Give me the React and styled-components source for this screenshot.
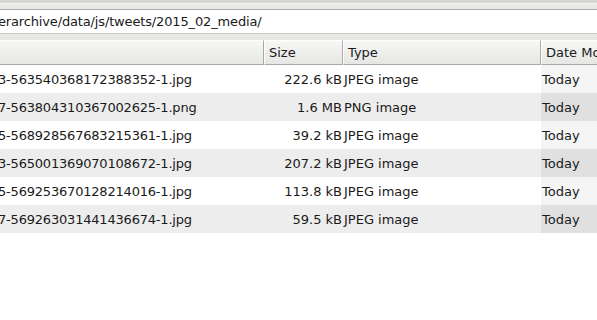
import React from 'react'
import styled, { createGlobalStyle } from 'styled-components'

const Global = createGlobalStyle`
  html, body {
    margin: 0;
    padding: 0;
    background: #ffffff;
  }
  body {
    font-family: "DejaVu Sans", "Liberation Sans", sans-serif;
    font-size: 13px;
    color: #1a1a1a;
    overflow: hidden;
  }
`;

const Window = styled.div`
  width: 597px;
  height: 320px;
  display: flex;
  flex-direction: column;
  background: #ffffff;
`;

const TopStrip = styled.div`
  height: 3px;
  background: #d6d6d4;
  border-bottom: 1px solid #f4f4f3;
`;

const PathBar = styled.div`
  background: #e8e8e7;
  padding: 5px 0 6px;
`;

const Entry = styled.div`
  height: 23px;
  background: #ffffff;
  border-top: 1px solid #a9a9a7;
  border-bottom: 1px solid #c9c9c7;
  display: flex;
  align-items: center;
  white-space: nowrap;
  overflow: hidden;
  & span {
    margin-left: -2px;
    letter-spacing: -0.15px;
  }
`;

const Header = styled.div`
  display: grid;
  grid-template-columns: 264px 79px 198px 1fr;
  height: 25px;
  background: #e8e8e7;
`;

const HeaderCell = styled.div`
  display: flex;
  align-items: center;
  padding-left: 4px;
  background: linear-gradient(#f7f7f6, #e6e6e5);
  border-right: 1px solid #a8a8a6;
  border-bottom: 1px solid #a8a8a6;
  border-left: 1px solid #ffffff;
  border-top: 1px solid #ffffff;
  white-space: nowrap;
  overflow: hidden;
  &:first-child {
    border-left: none;
  }
  &:last-child {
    border-right: none;
  }
`;

const Row = styled.div`
  display: grid;
  grid-template-columns: 264px 79px 198px 1fr;
  height: 28px;
  background: ${p => (p.$odd ? '#ededed' : '#ffffff')};
`;

const Cell = styled.div`
  display: flex;
  align-items: center;
  white-space: nowrap;
  overflow: hidden;
  justify-content: ${p => (p.$right ? 'flex-end' : 'flex-start')};
  padding: ${p => (p.$right ? '0 1px 0 0' : '0 0 0 1px')};
  background: ${p => (p.$sorted ? (p.$odd ? '#e0e0e0' : '#f5f5f5') : 'transparent')};
`;

const NameCell = styled(Cell)`
  padding-left: 0;
  & span {
    margin-left: -2px;
    letter-spacing: -0.2px;
  }
`;

const files = [
  ['3-563540368172388352-1.jpg', '222.6 kB', 'JPEG image'],
  ['7-563804310367002625-1.png', '1.6 MB', 'PNG image'],
  ['5-568928567683215361-1.jpg', '39.2 kB', 'JPEG image'],
  ['3-565001369070108672-1.jpg', '207.2 kB', 'JPEG image'],
  ['5-569253670128214016-1.jpg', '113.8 kB', 'JPEG image'],
  ['7-569263031441436674-1.jpg', '59.5 kB', 'JPEG image'],
];

export default function App() {
  return (
    <Window>
      <Global />
      <TopStrip />
      <PathBar>
        <Entry><span>erarchive/data/js/tweets/2015_02_media/</span></Entry>
      </PathBar>
      <Header>
        <HeaderCell />
        <HeaderCell>Size</HeaderCell>
        <HeaderCell>Type</HeaderCell>
        <HeaderCell>Date Mo</HeaderCell>
      </Header>
      {files.map(([name, size, type], i) => (
        <Row key={name} $odd={i % 2 === 1}>
          <NameCell><span>{name}</span></NameCell>
          <Cell $right>{size}</Cell>
          <Cell>{type}</Cell>
          <Cell $sorted $odd={i % 2 === 1}>Today</Cell>
        </Row>
      ))}
    </Window>
  )
}
